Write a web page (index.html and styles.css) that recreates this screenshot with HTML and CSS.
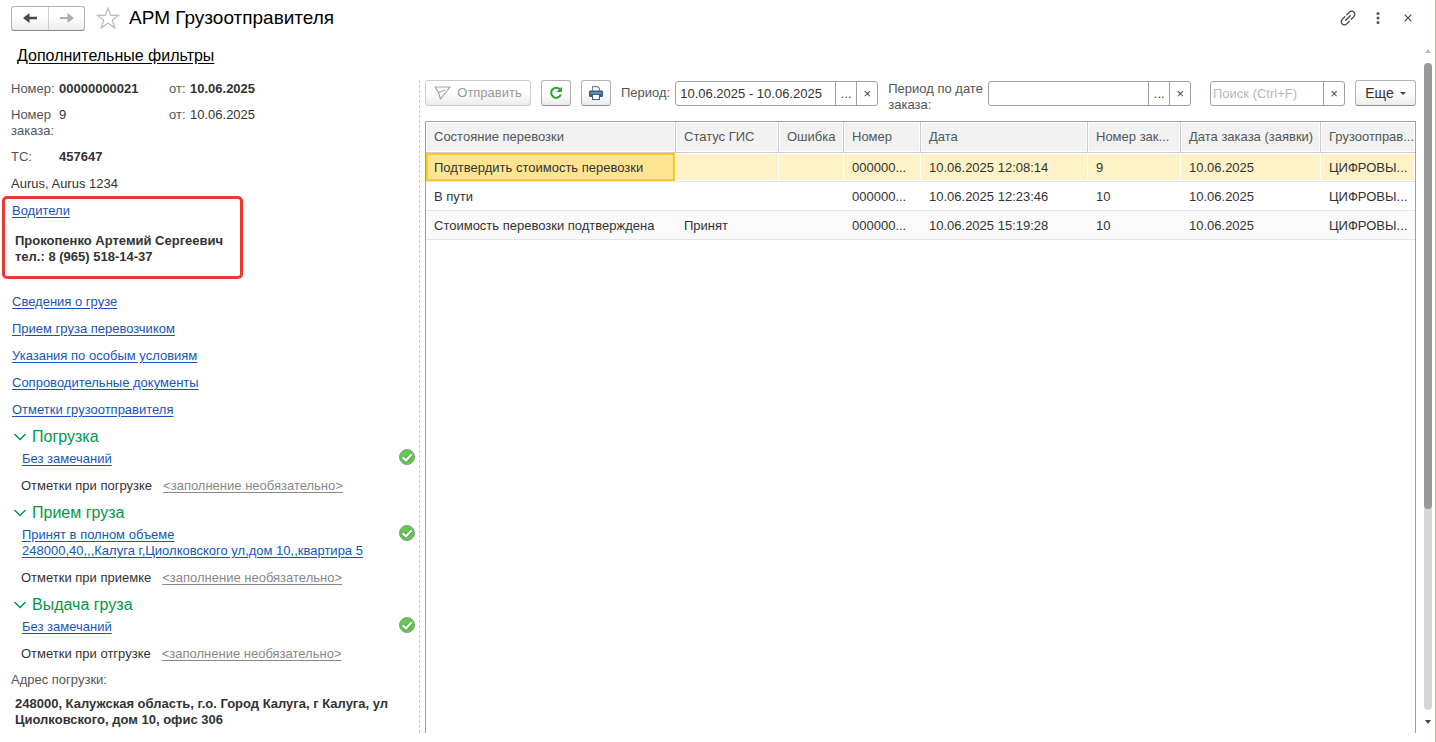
FILE: index.html
```html
<!DOCTYPE html>
<html lang="ru">
<head>
<meta charset="utf-8">
<title>АРМ Грузоотправителя</title>
<link rel="stylesheet" href="styles.css">
</head>
<body>
<header class="titlebar">
  <div class="history">
    <button type="button" aria-label="Назад"><svg width="14" height="10" viewBox="0 0 14 10"><path d="M6.500 0V3.700H14V6.300H6.500V10L0 5Z" fill="#4a4a4a"/></svg></button>
    <button type="button" aria-label="Вперед" disabled><svg width="14" height="10" viewBox="0 0 14 10"><path d="M7.500 0V3.900H0V6.100H7.500V10L14 5Z" fill="#adadad"/></svg></button>
  </div>
  <button type="button" class="plain star" aria-label="В избранное"><svg width="24" height="22" viewBox="0 0 24 22"><path d="M12 1.2 14.700 8.400H22.600L16.300 13.100 18.800 20.800 12 16.200 5.200 20.800 7.700 13.100 1.400 8.400H9.300Z" fill="#fff" stroke="#b4bac0" stroke-width="1.200"/></svg></button>
  <h1>АРМ Грузоотправителя</h1>
  <div class="window-tools">
    <button type="button" class="plain" aria-label="Ссылка"><svg width="16" height="16" viewBox="0 0 16 16"><g fill="none" stroke="#444" stroke-width="1.300" stroke-linecap="round"><path d="M6.700 4.700 9.300 2.100a3 3 0 0 1 4.500 0 3 3 0 0 1 0 4.500L11.200 9.200M9.300 11.300 6.700 13.900a3 3 0 0 1-4.500 0 3 3 0 0 1 0-4.500L4.800 6.800M5.700 10.300l4.600-4.600"/></g></svg></button>
    <button type="button" class="plain" aria-label="Меню"><svg width="4" height="12" viewBox="0 0 4 12"><g fill="#555"><circle cx="2" cy="1.600" r="1.500"/><circle cx="2" cy="6" r="1.500"/><circle cx="2" cy="10.400" r="1.500"/></g></svg></button>
    <button type="button" class="plain" aria-label="Закрыть"><svg width="8" height="8" viewBox="0 0 8 8"><path d="M.7.7l6.600 6.600M7.300.7.7 7.300" stroke="#444" stroke-width="1.200"/></svg></button>
  </div>
</header>

<div class="body">
  <main class="page">
    <a class="filters" href="#">Дополнительные фильтры</a>
    <div class="columns">
      <aside class="card">
        <dl class="facts">
          <dt>Номер:</dt><dd><b>00000000021</b></dd><dt>от:</dt><dd><b>10.06.2025</b></dd>
          <dt>Номер заказа:</dt><dd>9</dd><dt>от:</dt><dd>10.06.2025</dd>
          <dt>ТС:</dt><dd><b>457647</b></dd>
        </dl>
        <p class="vehicle">Aurus, Aurus 1234</p>
        <section class="drivers">
          <a href="#">Водители</a>
          <p>Прокопенко Артемий Сергеевич<br>тел.: 8 (965) 518-14-37</p>
        </section>
        <nav class="links">
          <a href="#">Сведения о грузе</a>
          <a href="#">Прием груза перевозчиком</a>
          <a href="#">Указания по особым условиям</a>
          <a href="#">Сопроводительные документы</a>
          <a href="#">Отметки грузоотправителя</a>
        </nav>
        <section class="stage">
          <h2><svg width="14" height="8" viewBox="0 0 14 8"><path d="M1.500 1l5.500 5.500 5.500-5.500" fill="none" stroke="#009846" stroke-width="1.500"/></svg>Погрузка</h2>
          <div class="result"><a href="#">Без замечаний</a><svg width="16" height="16" viewBox="0 0 16 16"><circle cx="8" cy="8" r="7.500" fill="#62c554" stroke="#77a873"/><path d="M3.700 8.300 7 11.300 12.600 5.300" fill="none" stroke="#4a9a45" stroke-width="3.800"/><path d="M3.700 8.300 7 11.300 12.600 5.300" fill="none" stroke="#fff" stroke-width="2.400"/></svg></div>
          <div class="mark">Отметки при погрузке <a href="#">&lt;заполнение необязательно&gt;</a></div>
        </section>
        <section class="stage">
          <h2><svg width="14" height="8" viewBox="0 0 14 8"><path d="M1.500 1l5.500 5.500 5.500-5.500" fill="none" stroke="#009846" stroke-width="1.500"/></svg>Прием груза</h2>
          <div class="result"><a href="#">Принят в полном объеме<br>248000,40,,,Калуга г,Циолковского ул,дом 10,,квартира 5</a><svg width="16" height="16" viewBox="0 0 16 16"><circle cx="8" cy="8" r="7.500" fill="#62c554" stroke="#77a873"/><path d="M3.700 8.300 7 11.300 12.600 5.300" fill="none" stroke="#4a9a45" stroke-width="3.800"/><path d="M3.700 8.300 7 11.300 12.600 5.300" fill="none" stroke="#fff" stroke-width="2.400"/></svg></div>
          <div class="mark">Отметки при приемке <a href="#">&lt;заполнение необязательно&gt;</a></div>
        </section>
        <section class="stage">
          <h2><svg width="14" height="8" viewBox="0 0 14 8"><path d="M1.500 1l5.500 5.500 5.500-5.500" fill="none" stroke="#009846" stroke-width="1.500"/></svg>Выдача груза</h2>
          <div class="result"><a href="#">Без замечаний</a><svg width="16" height="16" viewBox="0 0 16 16"><circle cx="8" cy="8" r="7.500" fill="#62c554" stroke="#77a873"/><path d="M3.700 8.300 7 11.300 12.600 5.300" fill="none" stroke="#4a9a45" stroke-width="3.800"/><path d="M3.700 8.300 7 11.300 12.600 5.300" fill="none" stroke="#fff" stroke-width="2.400"/></svg></div>
          <div class="mark">Отметки при отгрузке <a href="#">&lt;заполнение необязательно&gt;</a></div>
        </section>
        <p class="address-label">Адрес погрузки:</p>
        <p class="address">248000, Калужская область, г.о. Город Калуга, г Калуга, ул Циолковского, дом 10, офис 306</p>
      </aside>

      <section class="journal">
        <form class="toolbar">
          <button type="button" class="btn send" disabled><svg width="17" height="14" viewBox="0 0 17 14"><path d="M1 1H16L6.500 13 4.500 6.500ZM4.500 6.500 11 4" fill="none" stroke="#a3a3a3" stroke-width="1.200" stroke-linejoin="round"/></svg>Отправить</button>
          <button type="button" class="btn square" aria-label="Обновить"><svg width="14" height="14" viewBox="0 0 14 14"><path d="M10.800 3.300A5 5 0 1 0 11.800 8.600" fill="none" stroke="#2da32d" stroke-width="2.100"/><path d="M12.800.8V6H7.600Z" fill="#2da32d"/></svg></button>
          <button type="button" class="btn square" aria-label="Печать"><svg width="14" height="14" viewBox="0 0 14 14"><path d="M3.500 5V.6H8.500L10.500 2.600V5" fill="#fff" stroke="#6a8599" stroke-width="1.100"/><rect y="4.500" width="14" height="6.500" rx="1.200" fill="#386080"/><path d="M1.500 7h11" stroke="#9db6ca"/><path d="M3.500 8.500h7v5h-7z" fill="#fff" stroke="#386080" stroke-width="1.100"/></svg></button>
          <label for="period">Период:</label>
          <div class="field date"><input id="period" type="text" value="10.06.2025 - 10.06.2025"><button type="button" aria-label="Выбрать">...</button><button type="button" aria-label="Очистить">×</button></div>
          <label class="wide" for="order-period">Период по дате заказа:</label>
          <div class="field date"><input id="order-period" type="text"><button type="button" aria-label="Выбрать дату заказа">...</button><button type="button" aria-label="Очистить дату заказа">×</button></div>
          <div class="field search"><input type="text" placeholder="Поиск (Ctrl+F)" aria-label="Поиск"><button type="button" aria-label="Очистить поиск">×</button></div>
          <button type="button" class="btn more">Еще<svg width="6" height="3" viewBox="0 0 6 3"><path d="M0 0h6L3 3z" fill="#444"/></svg></button>
        </form>
        <div class="grid">
          <table>
            <colgroup><col class="c-state"><col class="c-gis"><col class="c-error"><col class="c-number"><col class="c-date"><col class="c-order"><col class="c-order-date"><col></colgroup>
            <thead><tr><th>Состояние перевозки</th><th>Статус ГИС</th><th>Ошибка</th><th>Номер</th><th>Дата</th><th>Номер зак...</th><th>Дата заказа (заявки)</th><th>Грузоотправ...</th></tr></thead>
            <tbody>
              <tr class="selected"><td class="current">Подтвердить стоимость перевозки</td><td></td><td></td><td>000000...</td><td>10.06.2025 12:08:14</td><td>9</td><td>10.06.2025</td><td>ЦИФРОВЫ...</td></tr>
              <tr><td>В пути</td><td></td><td></td><td>000000...</td><td>10.06.2025 12:23:46</td><td>10</td><td>10.06.2025</td><td>ЦИФРОВЫ...</td></tr>
              <tr><td>Стоимость перевозки подтверждена</td><td>Принят</td><td></td><td>000000...</td><td>10.06.2025 15:19:28</td><td>10</td><td>10.06.2025</td><td>ЦИФРОВЫ...</td></tr>
            </tbody>
          </table>
        </div>
      </section>
    </div>
  </main>
  <div class="scrollbar">
    <svg width="6" height="4" viewBox="0 0 6 4"><path d="M0 4h6L3 0z" fill="#bbb"/></svg>
    <div class="track"><div class="thumb"></div></div>
    <svg width="6" height="4" viewBox="0 0 6 4"><path d="M0 0h6L3 4z" fill="#444"/></svg>
  </div>
</div>
</body>
</html>
```
FILE: styles.css
```css
* { box-sizing: border-box; }

body {
  display: flex;
  flex-direction: column;
  min-height: 100vh;
  margin: 0;
  border-right: 1px solid #c6c08a;
  background: #fff;
  color: #333;
  font: 13px/16px "Liberation Sans", Arial, sans-serif;
}

h1, h2, p, dl, dd { margin: 0; font-weight: normal; }
a { color: #1b54b8; text-underline-offset: 2px; }
button, input { font: inherit; color: inherit; }
svg { display: block; flex: none; }

.titlebar {
  display: flex;
  align-items: center;
  height: 36px;
  padding: 0 23px 0 11px;
}
.titlebar h1 { margin-left: 9px; color: #000; font-size: 19px; line-height: 24px; }
.history {
  display: flex;
  height: 25px;
  border: 1px solid #b3b3b3;
  border-bottom-color: #8c8c8c;
  border-radius: 3px;
  background: linear-gradient(#fff 40%, #ececec);
}
.history button {
  display: grid;
  place-items: center;
  width: 36px;
  padding: 0;
  border: 0;
  background: none;
}
.history button + button { border-left: 1px solid #cfcfcf; }
.plain { display: grid; place-items: center; padding: 0; border: 0; background: none; }
.star { margin-left: 11px; }
.window-tools { display: flex; align-items: center; gap: 20px; margin-left: auto; }
.window-tools .plain:last-child { margin-left: 4px; }

.body { display: flex; flex: 1; }
.page { display: flex; flex: 1; flex-direction: column; min-width: 0; padding: 10px 8px 9px 0; }
.filters {
  align-self: flex-start;
  margin-left: 17px;
  color: #000;
  font-size: 16px;
  line-height: 20px;
}
.columns { display: flex; flex: 1; margin-top: 14px; }

.card {
  flex: none;
  width: 420px;
  padding: 1px 4px 4px 2px;
  border-right: 1px dashed #ccc;
}
.facts {
  display: grid;
  grid-template-columns: 48px 110px 21px 1fr;
  row-gap: 10px;
  padding-left: 9px;
}
.facts dt { color: #555; }
.vehicle { margin-top: 11px; padding-left: 9px; }
.drivers {
  width: 241px;
  margin-top: 4px;
  padding: 4px 7px 11px;
  border: 3px solid #e83b30;
  border-radius: 5px;
}
.drivers p { margin: 14px 0 0 3px; font-weight: bold; white-space: nowrap; }
.links { display: flex; flex-direction: column; align-items: flex-start; gap: 11px; margin-top: 15px; padding-left: 10px; }
.stage { margin-top: 9px; padding-left: 11px; }
.stage h2 { display: flex; align-items: center; gap: 5px; color: #009846; font-size: 16px; line-height: 20px; }
.result { display: flex; align-items: flex-start; justify-content: space-between; margin: 2px 0 11px 9px; }
.result a { padding-top: 2px; }
.mark { display: flex; gap: 11px; margin-left: 8px; }
.mark a { color: #888; }
.address-label { margin-top: 10px; padding-left: 9px; color: #555; }
.address { margin-top: 8px; padding-left: 13px; font-weight: bold; }

.journal { display: flex; flex: 1; flex-direction: column; min-width: 0; padding-left: 5px; }
.toolbar { display: flex; height: 32px; margin-bottom: 9px; }
.toolbar label { flex: none; margin: 5px 5px 0 10px; color: #555; }
.toolbar .wide { width: 96px; margin: 1px 4px 0 10px; }
.btn {
  display: flex;
  flex: none;
  align-items: center;
  justify-content: center;
  height: 26px;
  padding: 0;
  border: 1px solid #b3b3b3;
  border-bottom-color: #8c8c8c;
  border-radius: 3px;
  background: linear-gradient(#fff 40%, #ececec);
}
.send { gap: 6px; width: 106px; border-color: #ccc; color: #999; }
.square { width: 30px; margin-left: 10px; }
.more { gap: 6px; width: 61px; margin-left: 10px; font-size: 14px; }
.field {
  display: flex;
  min-width: 0;
  height: 25px;
  margin-top: 1px;
  border: 1px solid #a0a0a0;
  border-radius: 3px;
  background: #fff;
}
.field input { flex: 1; width: 0; min-width: 0; padding: 0 4px; border: 0; background: none; outline: 0; }
.field input::placeholder { color: #b8b8b8; opacity: 1; }
.field button { flex: none; width: 21px; padding: 0; border: 0; border-left: 1px solid #a0a0a0; background: none; color: #444; }
.date { flex: 0 1 203px; }
.search { flex: 0 1 135px; margin-left: auto; }
.search input { padding: 0 2px; }

.grid { flex: 1; border: 1px solid #a0a0a0; border-bottom: 0; overflow: hidden; }
table { width: 100%; border-collapse: separate; border-spacing: 0; table-layout: fixed; }
th, td {
  overflow: hidden;
  padding: 0 1px 0 8px;
  text-align: left;
  white-space: nowrap;
}
th {
  height: 31px;
  border-right: 1px solid #ccc;
  border-bottom: 1px solid #ccc;
  background: #f2f2f2;
  box-shadow: inset 0 0 0 1px #fff;
  color: #555;
  font-weight: normal;
}
td { height: 29px; padding-top: 1px; border-bottom: 1px solid #e6e6e6; }
th:last-child { border-right: 0; }
tbody tr:nth-child(odd) { background: #fafafa; }
tbody tr.selected { background: #fef2c6; }
.selected td { border-right: 1px solid #fff; box-shadow: inset 0 1px #fff, inset 0 -1px #fff; }
.selected .current { background: #ffe592; box-shadow: inset 0 0 0 2px #fac822; }
.c-state { width: 250px; }
.c-gis { width: 103px; }
.c-error { width: 65px; }
.c-number { width: 77px; }
.c-date { width: 167px; }
.c-order { width: 93px; }
.c-order-date { width: 140px; }

.scrollbar { display: flex; flex: none; flex-direction: column; align-items: center; gap: 10px; width: 8px; margin: 13px 3px 18px 0; }
.track { flex: 1; width: 8px; border-radius: 4px; background: #d6d6d6; }
.thumb { height: 69%; border-radius: 4px; background: #999; }
```
